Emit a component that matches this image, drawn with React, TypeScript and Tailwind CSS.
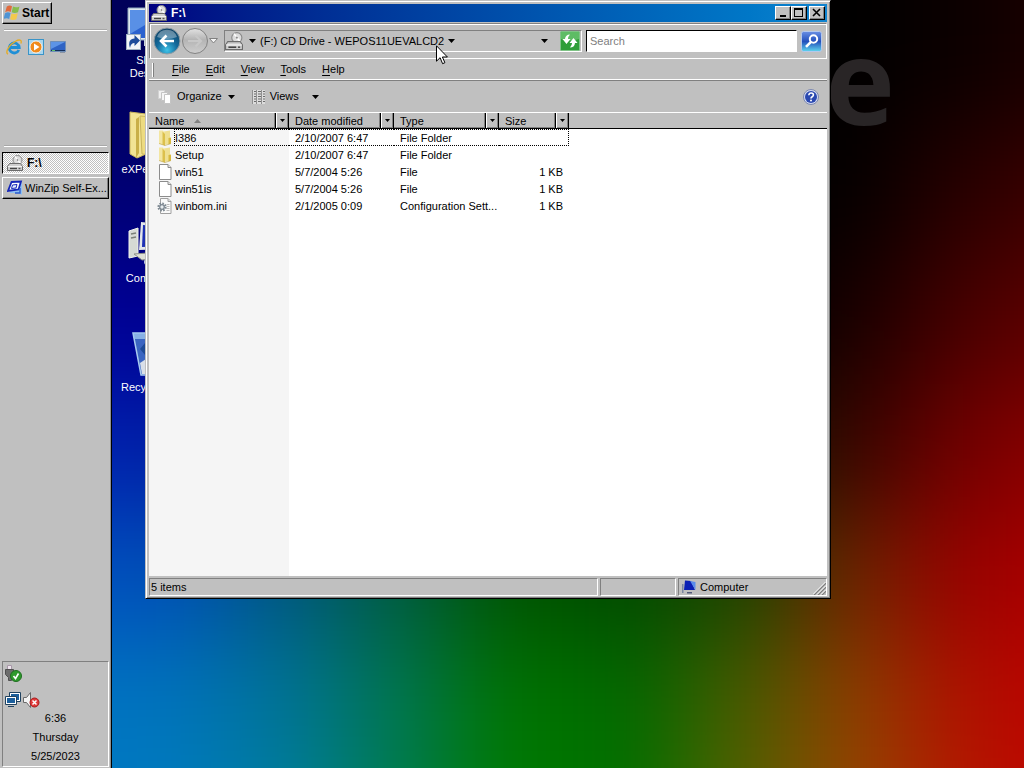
import type { ReactNode } from "react"
import clsx from "clsx"

const raised =
  "border border-t-white border-l-white border-r-black border-b-black bg-[#c0c0c0] shadow-[inset_-1px_-1px_0_#808080]"
const sunken = "border border-t-[#808080] border-l-[#808080] border-r-white border-b-white"

const columns = [
  { title: "Name", width: "w-[140px]", sorted: true },
  { title: "Date modified", width: "w-[105px]" },
  { title: "Type", width: "w-[105px]" },
  { title: "Size", width: "w-[70px]" },
]

const files = [
  { name: "I386", date: "2/10/2007 6:47", type: "File Folder", size: "", icon: <FolderIcon />, focused: true },
  { name: "Setup", date: "2/10/2007 6:47", type: "File Folder", size: "", icon: <FolderIcon /> },
  { name: "win51", date: "5/7/2004 5:26", type: "File", size: "1 KB", icon: <FileIcon /> },
  { name: "win51is", date: "5/7/2004 5:26", type: "File", size: "1 KB", icon: <FileIcon /> },
  { name: "winbom.ini", date: "2/1/2005 0:09", type: "Configuration Sett...", size: "1 KB", icon: <IniIcon /> },
]

const menus = ["File", "Edit", "View", "Tools", "Help"]

// Coarse colour grid of the wallpaper, softened with a blur
const wallpaper = [
  ["#00005a", "#00005a", "#000050", "#000030", "#000010", "#000000", "#000000", "#000000", "#0c0000", "#200000"],
  ["#000074", "#000074", "#000060", "#000040", "#000020", "#000000", "#000000", "#040000", "#2a0000", "#420000"],
  ["#000096", "#000096", "#000060", "#001020", "#001800", "#001000", "#000000", "#180000", "#4a0000", "#640000"],
  ["#0020b0", "#0020a8", "#002c70", "#003030", "#003400", "#003000", "#102000", "#380400", "#740000", "#900000"],
  ["#0050c0", "#0050b8", "#005880", "#005c40", "#005400", "#004a00", "#1c4400", "#6c2400", "#9a0000", "#b00000"],
  ["#0074c4", "#0074bc", "#007498", "#007650", "#007400", "#006a00", "#485c00", "#8c4000", "#b01000", "#c00000"],
  ["#007ac4", "#007cc0", "#0080a0", "#008050", "#007e00", "#007400", "#546400", "#984800", "#b81800", "#c00000"],
]

function Wallpaper() {
  return (
    <svg className="absolute inset-0 h-full w-full" viewBox="0 0 912 768" preserveAspectRatio="none" aria-hidden="true">
      <defs>
        <filter id="soften" x="-20%" y="-20%" width="140%" height="140%" colorInterpolationFilters="sRGB">
          <feGaussianBlur stdDeviation="48" />
        </filter>
      </defs>
      <rect width="912" height="768" fill="#000" />
      <g filter="url(#soften)">
        {wallpaper.map((row, y) =>
          row.map((color, x) => {
            const left = x === 0 ? -250 : (x - 1) * 114
            const top = y === 0 ? -200 : y * 128
            return (
              <rect
                key={`${x}-${y}`}
                x={left}
                y={top}
                width={x === 0 ? 251 : x === 9 ? 300 : 115}
                height={y === 0 ? 329 : y === 6 ? 300 : 129}
                fill={color}
              />
            )
          })
        )}
      </g>
    </svg>
  )
}

function Caret({ className }: { className?: string }) {
  return (
    <svg className={className} width="7" height="4" viewBox="0 0 7 4" aria-hidden="true">
      <path d="M0 0h7L3.5 4z" fill="currentColor" />
    </svg>
  )
}

function DriveIcon({ size = 16 }: { size?: number }) {
  return (
    <svg width={size} height={size} viewBox="0 0 16 16" aria-hidden="true">
      <circle cx="10.5" cy="5" r="4.5" fill="#dcdcdc" stroke="#8a8a8a" />
      <path d="M10.5 5 8 1.4M10.5 5l3 3.4" stroke="#fff" strokeWidth="1.4" />
      <circle cx="10.5" cy="5" r="1.3" fill="#8a8a8a" stroke="#fff" strokeWidth=".6" />
      <path d="M2.5 8.500h11l2 3v4H.5v-4z" fill="#cfcfcf" stroke="#6c6c6c" />
      <path d="M1 11.5h14" stroke="#f4f4f4" />
      <path d="M3 13.500h7" stroke="#444" strokeWidth="1.4" />
      <path d="M11.500 13.500h2" stroke="#555" strokeWidth="1.4" />
    </svg>
  )
}

function FolderIcon() {
  return (
    <svg width="16" height="16" viewBox="0 0 16 16" aria-hidden="true">
      <path d="M7 1.500 13 .5v13L7 15z" fill="#efe092" />
      <path d="M2 .5h4L8 3v12.500L2 13.500z" fill="#f3e6a2" />
      <path d="M5.500 1.500 8 4v11.500L5.500 14.500z" fill="#dcc04c" />
      <path d="M11.500 8 14 7.500v6l-2.500 1z" fill="#d8b93e" />
      <path d="M2 13.500 8 15.500l6-2" fill="none" stroke="#bfa53c" strokeWidth=".6" />
    </svg>
  )
}

function FileIcon() {
  return (
    <svg width="16" height="16" viewBox="0 0 16 16" aria-hidden="true">
      <path d="M2.500.5h8.500l3 3v12H2.500z" fill="#fff" stroke="#8c8c8c" />
      <path d="M11 .5v3h3" fill="#e8e8e8" stroke="#8c8c8c" />
    </svg>
  )
}

function IniIcon() {
  return (
    <svg width="16" height="16" viewBox="0 0 16 16" aria-hidden="true">
      <path d="M3.500.5H11l3 3v12H3.500z" fill="#fafafa" stroke="#a0a0a0" />
      <path d="M11 .5v3h3" fill="#e0e0e0" stroke="#a0a0a0" />
      <path d="M9.500 6.500h3M9.500 8.500h3M9.500 10.500h3M9.500 12.500h3" stroke="#bdbdbd" />
      <circle cx="5" cy="9" r="3.600" fill="none" stroke="#7c8790" strokeWidth="2" strokeDasharray="1.6 1.2" />
      <circle cx="5" cy="9" r="2.300" fill="#e8ecef" stroke="#7c8790" strokeWidth="1.300" />
    </svg>
  )
}

function StartFlag() {
  return (
    <svg width="16" height="16" viewBox="0 0 16 16" aria-hidden="true">
      <path d="M2.800 1.500Q5.500-.2 8 1.200L6.700 7Q4 5.600 1.200 7.200z" fill="#e06a3c" />
      <path d="M9 1.600q3 1.400 6.500-.2L14 7.200q-3.200 1.500-6.300.1z" fill="#86bd4c" />
      <path d="M1 8.200q2.800-1.600 5.500-.2L5.200 14Q2.500 12.600-.4 14z" fill="#4f94d4" />
      <path d="M7.500 8.400q3 1.300 6.300-.1L12.300 14.300q-3 1.400-6.200 0z" fill="#f3c94c" />
    </svg>
  )
}

function ExplorerIcon() {
  return (
    <svg width="16" height="16" viewBox="0 0 16 16" aria-hidden="true">
      <path d="M12.800 11A5 5 0 1 1 13.200 8.500H4" fill="none" stroke="#1f8fd6" strokeWidth="2.800" />
      <path d="M2 15.300C-1.500 13 4 5 9.500 2.300 13 .2 16.500.6 14.800 4.500" fill="none" stroke="#e6ac24" strokeWidth="1.300" />
    </svg>
  )
}

function MediaIcon() {
  return (
    <svg width="16" height="16" viewBox="0 0 16 16" aria-hidden="true">
      <rect x=".5" y=".5" width="15" height="15" fill="#a9d6ee" stroke="#3a94c8" />
      <circle cx="8" cy="8" r="6" fill="#f08a1c" stroke="#fff" strokeWidth=".8" />
      <path d="M6 4.500 11.500 8 6 11.500z" fill="#fff" />
    </svg>
  )
}

function ShowDesktopIcon() {
  return (
    <svg width="16" height="16" viewBox="0 0 16 16" aria-hidden="true">
      <path d="M.5 2.500h15v10H.5z" fill="#2f63c4" stroke="#6f8fb8" />
      <path d="M1 3h14L1 10z" fill="#5d94e6" />
      <path d="M1 11h14v1H1z" fill="#15305c" />
      <path d="M2 11h3v1H2z" fill="#5fc46a" />
      <path d="M10 13.500h5" stroke="#8a94a4" />
    </svg>
  )
}

function WinZipIcon() {
  return (
    <svg width="16" height="16" viewBox="0 0 16 16" aria-hidden="true">
      <path d="M4 3h11v12l-3-2H3z" fill="#8fc0f2" />
      <path d="M4.500 2 14 1.500 11.500 9.500 1 11z" fill="#fff" stroke="#1526b8" strokeWidth="1.800" />
      <path d="M5.500 5 10 4.500 9 8l-4.500.5z" fill="#e8f0ff" stroke="#1526b8" />
      <path d="M13 8v5H8" fill="none" stroke="#2a5cd0" strokeWidth="1.400" />
    </svg>
  )
}

function MonitorIcon() {
  return (
    <svg width="48" height="48" viewBox="0 0 48 48" aria-hidden="true">
      <path d="M2 6h44v32H2z" fill="#dfe8f0" stroke="#8fa6bd" />
      <path d="M4 8h40v28H4z" fill="#2b62cf" />
      <path d="M4 8h40L4 32z" fill="#5990e6" />
      <path d="M18 38h12v6H18z" fill="#c8d2dc" />
      <rect x=".5" y="32.500" width="14" height="15" fill="#f2f5f8" stroke="#9fb0c0" />
      <path d="M4 46c-2-6 0-9.500 4.500-9.500V33l5.500 5.500L8.500 44v-3C6 41 4.500 42.500 4 46z" fill="#1e4c9a" />
    </svg>
  )
}

function BigFolderIcon() {
  return (
    <svg width="48" height="48" viewBox="0 0 48 48" aria-hidden="true">
      <path d="M4 1l16 2v40l-9 4-7-4z" fill="#f2e394" stroke="#c9b55c" />
      <path d="M14 5l26 2v38l-24-2z" fill="#eddb80" stroke="#c9b55c" />
      <path d="M13 6v36l-3 5V8z" fill="#c9af48" />
    </svg>
  )
}

function ComputerIcon() {
  return (
    <svg width="48" height="48" viewBox="0 0 48 48" aria-hidden="true">
      <path d="M3 11l9-3v28l-9 2z" fill="#d6dad4" stroke="#f1f3ee" />
      <path d="M5 14l5-1M5 18l5-1" stroke="#7a8078" strokeWidth="1.500" />
      <path d="M15 2l28 3v24l-30 1z" fill="#e3e6ea" />
      <path d="M17 5l24 2v19l-25 1z" fill="#1c2fb4" />
      <path d="M8 34l28-2 6 5-26 3z" fill="#dfe0d6" stroke="#8f9188" />
      <circle cx="21" cy="42" r="3" fill="#c3cbe8" />
    </svg>
  )
}

function RecycleIcon() {
  return (
    <svg width="48" height="48" viewBox="0 0 48 48" aria-hidden="true">
      <path d="M7 4h34l-6 42H15z" fill="#4f86cf" fillOpacity=".75" stroke="#a9cbf0" strokeWidth="1.500" />
      <path d="M7 4h34l-1 6H8z" fill="#9cc4ee" fillOpacity=".8" />
      <path d="M14 20l5-6 4 7 7-3-3 10-8-2z" fill="#1d4a96" />
      <path d="M14 34l6-4 5 6 6-2-1 11H16z" fill="#d9dfe8" />
    </svg>
  )
}

function BackIcon() {
  return (
    <svg width="28" height="28" viewBox="0 0 28 28" aria-hidden="true">
      <defs>
        <radialGradient id="back" cx=".5" cy=".85" r=".8">
          <stop offset="0" stopColor="#3fc3e8" />
          <stop offset=".5" stopColor="#136a9c" />
          <stop offset="1" stopColor="#0f4468" />
        </radialGradient>
      </defs>
      <circle cx="14" cy="14" r="13" fill="url(#back)" stroke="#8f9ca4" />
      <path d="M4 10a10.500 10.500 0 0 1 20 0q-10 4-20 0z" fill="#fff" fillOpacity=".35" />
      <path d="M21 14H8m5.500-5.500L8 14l5.500 5.500" fill="none" stroke="#fff" strokeWidth="2.600" />
    </svg>
  )
}

function ForwardIcon() {
  return (
    <svg width="28" height="28" viewBox="0 0 28 28" aria-hidden="true">
      <defs>
        <linearGradient id="forward" x2="0" y2="1">
          <stop offset="0" stopColor="#e2e2e2" />
          <stop offset=".45" stopColor="#b4b4b4" />
          <stop offset="1" stopColor="#cecece" />
        </linearGradient>
      </defs>
      <circle cx="14" cy="14" r="12.500" fill="url(#forward)" stroke="#828282" />
      <path d="M7 14h13m-5.500-5.500L20 14l-5.500 5.500" fill="none" stroke="#c8c8c8" strokeWidth="2" />
    </svg>
  )
}

const desktopIcons: { label: string; icon: ReactNode }[] = [
  { label: "Show Desktop", icon: <MonitorIcon /> },
  { label: "eXPerience", icon: <BigFolderIcon /> },
  { label: "Computer", icon: <ComputerIcon /> },
  { label: "Recycle Bin", icon: <RecycleIcon /> },
]

function Taskbar() {
  return (
    <aside className="flex w-28 shrink-0 flex-col border-r border-black bg-[#c0c0c0] px-0.5 pt-0.5 shadow-[inset_-1px_0_0_#909090]">
      <button className={clsx("flex h-[22px] w-[50px] items-center gap-0.5 px-px text-[12px] font-bold", raised)}>
        <StartFlag />
        Start
      </button>
      <div className="mx-0.5 mt-[5px] h-0.5 w-[103px] border-b border-white bg-[#a8a8a8]" />
      <div className="mt-2 flex gap-1.5 pl-1">
        <button aria-label="Internet Explorer"><ExplorerIcon /></button>
        <button aria-label="Windows Media Player"><MediaIcon /></button>
        <button aria-label="Show desktop"><ShowDesktopIcon /></button>
      </div>
      <div className="mx-0.5 mt-[90px] h-0.5 w-[103px] border-b border-white bg-[#a8a8a8]" />
      <div className="mt-[5px] flex w-[107px] flex-col gap-[3px]">
        <button className="flex h-[22px] items-center gap-1 border border-t-black border-r-white border-b-white border-l-black bg-[repeating-conic-gradient(#fff_0_25%,#c0c0c0_0_50%)] bg-[length:2px_2px] px-1 text-[12px] font-bold">
          <DriveIcon />
          F:\
        </button>
        <button className={clsx("flex h-[22px] items-center gap-0.5 px-1 text-[11px]", raised)}>
          <span className="shrink-0"><WinZipIcon /></span>
          <span className="whitespace-nowrap">WinZip Self-Ex...</span>
        </button>
      </div>
      <div className={clsx("mt-auto mb-px flex h-[106px] w-[107px] flex-col px-0.5 pt-[3px]", sunken)}>
        <svg width="17" height="18" viewBox="0 0 17 18" aria-label="Safely remove hardware">
          <path d="M2.500.5h4v4h-4z" fill="#eee4ee" stroke="#a898a8" />
          <path d="M.5 4.500h8v5l-2 3v3h-3v-3l-3-3z" fill="#6c6c6c" stroke="#505050" />
          <circle cx="11" cy="11" r="5.500" fill="#2f9a2c" stroke="#1f6e20" />
          <path d="m8.500 11 2 2.500 3-5" fill="none" stroke="#fff" strokeWidth="1.600" />
        </svg>
        <div className="mt-[9px] flex gap-0.5">
          <svg width="16" height="16" viewBox="0 0 16 16" aria-label="Network">
            <path d="M4.500.5h11v9h-11z" fill="#fff" stroke="#20425f" />
            <path d="M6 2h8v6H6z" fill="#1c5f9c" />
            <path d="M.5 4.500h11v8H.5z" fill="#fff" stroke="#20425f" />
            <path d="M2 6h8v5H2z" fill="#1c5f9c" />
            <path d="M3 14.500h6" stroke="#20425f" />
          </svg>
          <svg width="17" height="16" viewBox="0 0 17 16" aria-label="Volume muted">
            <path d="M.5 5.500h3l4-5v15l-4-5h-3z" fill="#f4f4f4" stroke="#6a6a6a" />
            <circle cx="11.500" cy="10.500" r="4.500" fill="#e03a3a" stroke="#a81c1c" />
            <path d="m9.500 8.500 4 4m0-4-4 4" stroke="#fff" strokeWidth="1.500" />
          </svg>
        </div>
        <div className="mt-px text-center text-[11px] leading-[19px]">
          <div>6:36</div>
          <div>Thursday</div>
          <div>5/25/2023</div>
        </div>
      </div>
    </aside>
  )
}

function TitleBar() {
  return (
    <header className="flex h-[18px] shrink-0 items-center gap-1 bg-linear-to-r from-[#000080] to-[#1084d0] pr-0.5 pl-0.5 text-white">
      <DriveIcon />
      <h1 className="flex-1 text-[12px] font-bold">F:\</h1>
      <div className="flex text-black">
        <button aria-label="Minimize" className={clsx("flex h-3.5 w-4 items-center justify-center", raised)}>
          <svg width="12" height="10" viewBox="0 0 12 10"><path d="M3 7h6v2H3z" /></svg>
        </button>
        <button aria-label="Maximize" className={clsx("flex h-3.5 w-4 items-center justify-center", raised)}>
          <svg width="12" height="10" viewBox="0 0 12 10"><path d="M1 0h9v9H1zM2 2v6h7V2z" fillRule="evenodd" /></svg>
        </button>
        <button aria-label="Close" className={clsx("ml-0.5 flex h-3.5 w-4 items-center justify-center", raised)}>
          <svg width="12" height="10" viewBox="0 0 12 10"><path d="m2 1 7 7M9 1 2 8" stroke="#000" strokeWidth="1.600" /></svg>
        </button>
      </div>
    </header>
  )
}

function AddressBar() {
  return (
    <div className={clsx("mt-px flex h-9 shrink-0 items-center pr-1 pl-[3px] shadow-[inset_1px_1px_0_#fff]", sunken)}>
      <button aria-label="Back"><BackIcon /></button>
      <button aria-label="Forward"><ForwardIcon /></button>
      <button aria-label="Recent pages">
        <svg width="9" height="6" viewBox="0 0 9 6"><path d="M.5.5h8l-4 4.500z" fill="#f4f4f4" stroke="#808080" /></svg>
      </button>
      <div className={clsx("ml-1.5 flex h-[22px] flex-1 items-center pr-px", sunken)}>
        <DriveIcon size={18} />
        <Caret className="ml-1.5" />
        <span className="ml-1 text-[11px] whitespace-nowrap">(F:) CD Drive - WEPOS11UEVALCD2</span>
        <Caret className="ml-1" />
        <button aria-label="Previous locations" className="mr-3 ml-auto"><Caret /></button>
        <button aria-label="Refresh">
          <svg width="20" height="20" viewBox="0 0 20 20">
            <rect x=".5" y=".5" width="19" height="19" rx="1" fill="#2f9e38" stroke="#7fc486" />
            <path d="M1 1h18v7Q10 11 1 8z" fill="#7fd084" fillOpacity=".6" />
            <path d="M10 3.500Q5.500 3.500 5 8H2.500l4 5 4-5H8q0-2.500 2-4.500zM10 16.500q4.500 0 5-4.500h2.500l-4-5-4 5H12q0 2.500-2 4.500z" fill="#fff" />
          </svg>
        </button>
      </div>
      <input
        type="text"
        placeholder="Search"
        aria-label="Search"
        className="ml-1 h-[22px] w-[211px] border border-t-black border-r-white border-b-white border-l-black bg-white px-[3px] text-[11px] outline-none placeholder:text-[#808080]"
      />
      <button aria-label="Go" className="ml-1">
        <svg width="21" height="21" viewBox="0 0 21 21">
          <defs>
            <linearGradient id="go" x2="0" y2="1">
              <stop offset="0" stopColor="#6a8fe4" />
              <stop offset=".5" stopColor="#2350bc" />
              <stop offset="1" stopColor="#5fd6ee" />
            </linearGradient>
          </defs>
          <rect x=".5" y=".5" width="20" height="20" rx="2" fill="url(#go)" stroke="#b4c8ec" />
          <circle cx="12.500" cy="8" r="3.700" fill="none" stroke="#fff" strokeWidth="2" />
          <path d="m10 10.800-5 5" stroke="#fff" strokeWidth="2.600" />
        </svg>
      </button>
    </div>
  )
}

function Toolbar() {
  return (
    <div className="flex h-[31px] shrink-0 items-center pr-2 pl-2 text-[11px]">
      <button className="flex items-center gap-1">
        <svg width="16" height="16" viewBox="0 0 16 16" aria-hidden="true">
          <path d="M1.500 1.500h6v8h-6z" fill="#f0f0f0" stroke="#d2d2d2" />
          <path d="M4.500 3.500h6v8h-6z" fill="#f6f6f6" stroke="#c4c4c4" />
          <path d="M7.500 5.500h6v9h-6z" fill="#fff" stroke="#c4c4c4" />
        </svg>
        Organize
        <Caret className="ml-0.5" />
      </button>
      <button className="ml-4 flex items-center gap-[3px]">
        <svg width="16" height="16" viewBox="0 0 16 16" aria-hidden="true">
          <path d="M1 1h13v14H1z" fill="#dcdcdc" />
          <path d="M1.500 1v14M5.500 1v14M10.500 1v14" stroke="#909090" />
          <path d="M3 2.500h2M7 2.500h3M12 2.500h2M3 5h2M7 5h3M12 5h2M3 7.500h2M7 7.500h3M12 7.500h2M3 10h2M7 10h3M12 10h2M3 12.500h2M7 12.500h3M12 12.500h2" stroke="#6c6c6c" />
        </svg>
        Views
        <Caret className="ml-2.5" />
      </button>
      <button aria-label="Get help" className="ml-auto">
        <svg width="16" height="16" viewBox="0 0 16 16">
          <circle cx="8" cy="8" r="7.500" fill="#d4daf0" stroke="#7c88b0" />
          <circle cx="8" cy="8" r="6" fill="#2a48b0" />
          <path d="M5.800 6.200Q6 4 8.200 4t2.200 2q0 1-1.200 1.700T8 9.500" fill="none" stroke="#fff" strokeWidth="1.600" />
          <circle cx="8" cy="11.500" r="1" fill="#fff" />
        </svg>
      </button>
    </div>
  )
}

function FileList() {
  return (
    <div className="min-h-0 flex-1 overflow-hidden bg-[linear-gradient(to_right,#f5f5f5_140px,#fff_140px)]">
      <table className="w-full table-fixed border-separate border-spacing-0 text-[11px] leading-[13px]">
        <thead>
          <tr className="h-[17px]">
            {columns.map((column) => (
              <th
                key={column.title}
                className={clsx("border-t border-b border-t-white border-b-black bg-[#c0c0c0] p-0 text-left font-normal", column.width)}
              >
                <div className="flex h-[15px] items-stretch">
                  <button className="flex flex-1 items-center gap-2.5 border-r border-black pt-px pl-1.5 shadow-[inset_-1px_-1px_0_#808080]">
                    {column.title}
                    {column.sorted && (
                      <svg width="7" height="4" viewBox="0 0 7 4" aria-hidden="true">
                        <path d="M0 4h7L3.500 0z" fill="#808080" />
                      </svg>
                    )}
                  </button>
                  <button
                    aria-label={`Filter by ${column.title}`}
                    className="flex w-[13px] items-center justify-center border-r border-l border-r-black border-l-white shadow-[inset_-1px_-1px_0_#808080]"
                  >
                    <svg width="5" height="3" viewBox="0 0 5 3"><path d="M0 0h5L2.500 3z" /></svg>
                  </button>
                </div>
              </th>
            ))}
            <th className="border-t border-b border-t-white border-b-black bg-[#c0c0c0] p-0" />
          </tr>
        </thead>
        <tbody>
          {files.map((file) => {
            const line = file.focused ? "border-y border-dotted border-black pt-0.5" : "pt-[3px] pb-px"
            return (
              <tr key={file.name} className="h-[17px]">
                <td className="p-0">
                  <div className="flex h-[17px] items-center pl-2">
                    <span className="shrink-0">{file.icon}</span>
                    <span className={clsx("ml-px h-[17px] flex-1", file.focused ? "border-l" : "pl-px", line)}>
                      {file.name}
                    </span>
                  </div>
                </td>
                <td className={clsx("pl-1.5", line)}>{file.date}</td>
                <td className={clsx("pl-1.5 whitespace-nowrap", line)}>{file.type}</td>
                <td className={clsx("pr-1.5 text-right", line, file.focused && "border-r")}>{file.size}</td>
                <td />
              </tr>
            )
          })}
        </tbody>
      </table>
    </div>
  )
}

function ExplorerWindow() {
  return (
    <main className="absolute top-0 right-[193px] bottom-[169px] left-[33px] flex flex-col border border-t-[#c0c0c0] border-r-black border-b-black border-l-[#c0c0c0] bg-[#c0c0c0] px-[3px] pt-[3px] pb-0.5 shadow-[inset_1px_1px_0_#fff,inset_-1px_-1px_0_#808080]">
      <TitleBar />
      <AddressBar />
      <nav className="flex h-[22px] shrink-0 items-center border-b border-[#808080] pl-[3px] text-[11px] shadow-[inset_0_-1px_0_#fff]">
        <div className="mr-2.5 h-3.5 w-0.5 border-r border-[#808080] bg-white" />
        {menus.map((menu) => (
          <button key={menu} className="px-2">
            <span className="underline underline-offset-2">{menu[0]}</span>
            {menu.slice(1)}
          </button>
        ))}
      </nav>
      <Toolbar />
      <FileList />
      <footer className="flex h-5 shrink-0 items-end gap-0.5 text-[11px]">
        <div className={clsx("flex h-[18px] flex-1 items-center pl-px", sunken)}>5 items</div>
        <div className={clsx("h-[18px] w-[76px]", sunken)} />
        <div className={clsx("flex h-[18px] w-[149px] items-center gap-[3px] pl-0.5", sunken)}>
          <svg width="16" height="16" viewBox="0 0 16 16" aria-hidden="true">
            <path d="M1 5h1.500v9H1z" fill="#7a86a0" />
            <path d="m4 1.500 6 .5 4 9H3z" fill="#0a1fb4" />
            <path d="m9 2 5.500 1v8z" fill="#5a8cec" />
            <path d="M6 13h5v1.500H6z" fill="#505878" />
          </svg>
          Computer
          <svg className="ml-auto self-end" width="13" height="13" viewBox="0 0 13 13" aria-hidden="true">
            <path d="M1 13 13 1M5 13l8-8M9 13l4-4" stroke="#808080" strokeWidth="1.400" />
            <path d="M0 12.500 12.500 0M4 12.500 13 3.500M8 12.500l5-5" stroke="#fff" />
          </svg>
        </div>
      </footer>
    </main>
  )
}

export default function App() {
  return (
    <div className="flex h-screen overflow-hidden font-['Liberation_Sans',Arial,sans-serif] text-black">
      <Taskbar />
      <div className="relative flex-1 overflow-hidden">
        <Wallpaper />
        <span className="absolute top-[20px] right-[129px] font-['Open_Sans',sans-serif] text-[118px] leading-[120px] font-bold text-[#292526]">
          e
        </span>
        <div className="relative flex w-[76px] flex-col pt-0.5">
          {desktopIcons.map((item) => (
            <button key={item.label} className="flex h-[109px] flex-col items-center gap-1 text-[11px] leading-[13px] text-white">
              {item.icon}
              <span className="w-[62px]">{item.label}</span>
            </button>
          ))}
        </div>
        <ExplorerWindow />
        <svg className="absolute top-[45px] left-[324px]" width="12" height="20" viewBox="0 0 12 20" aria-hidden="true">
          <path d="M.5.8v15.400l3.600-3.500 2.500 6 2.300-1-2.500-5.700h5z" fill="#fff" stroke="#000" />
        </svg>
      </div>
    </div>
  )
}
